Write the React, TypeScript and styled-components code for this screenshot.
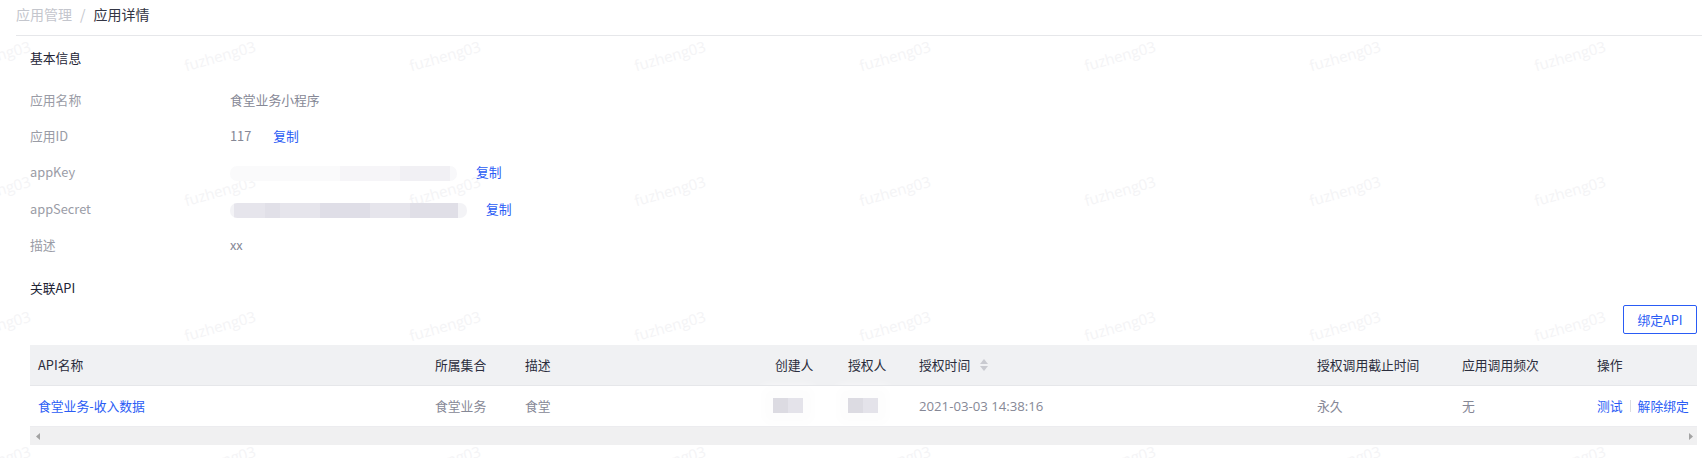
import styled, { createGlobalStyle } from "styled-components";

const GlobalStyle = createGlobalStyle`
  html, body {
    margin: 0;
    padding: 0;
    background: #fff;
    font-family: "Noto Sans CJK SC", "Liberation Sans", sans-serif;
    font-size: 12.8px;
    overflow: hidden;
  }
  * { box-sizing: border-box; }
`;

const Page = styled.div`
  position: relative;
  width: 1702px;
  height: 458px;
  overflow: hidden;
`;
const Watermarks = styled.div`
  position: absolute;
  top: 0;
  left: -32px;
  display: grid;
  grid-template-columns: repeat(9, 225px);
  grid-auto-rows: 135px;
  pointer-events: none;
`;
const Mark = styled.span`
  display: block;
  width: 75px;
  margin-top: 45px;
  font-family: "Open Sans", sans-serif;
  font-size: 15px;
  line-height: 18px;
  color: #f4f4f6;
  transform: rotate(-16deg);
`;
const Breadcrumb = styled.div`
  position: relative;
  z-index: 1;
  display: flex;
  align-items: center;
  gap: 8px;
  height: 36px;
  margin-left: 16px;
  padding-bottom: 8px;
  border-bottom: 1px solid #e6e7ea;
  font-size: 14px;
  line-height: 18px;
`;
const Crumb = styled.span<{ $current?: boolean }>`
  color: ${(p) => (p.$current ? "#333544" : "#c4c6cd")};
`;
const Content = styled.div`
  position: relative;
  z-index: 1;
  padding: 13px 5px 0 30px;
`;
const SectionTitle = styled.div`
  height: 18px;
  line-height: 18px;
  color: #232536;
`;
const InfoList = styled.div`
  margin: 24px 0 7px;
`;
const InfoRow = styled.div`
  display: flex;
  height: 36.2px;
  line-height: 18px;
`;
const Label = styled.div`
  width: 200px;
  color: #9a9ca6;
`;
const Value = styled.div`
  display: flex;
  color: #868896;
`;
const CopyLink = styled.a<{ $gap: number }>`
  margin-left: ${(p) => p.$gap}px;
  color: #2a5cf5;
`;
const Blur = styled.div<{ $width: number; $dark?: boolean }>`
  width: ${(p) => p.$width}px;
  height: 15px;
  margin-top: 3px;
  border-radius: 7px;
  background: ${(p) =>
    p.$dark
      ? "linear-gradient(90deg, #f3f3f6 0 4px, #e6e5ec 4px 35px, #e1e0e8 35px 50px, #e6e5ec 50px 90px, #dfdee7 90px 140px, #e6e5ec 140px 180px, #e0dfe7 180px 228px, #f3f3f6 228px)"
      : "linear-gradient(90deg, #fafafb 0 110px, #f6f5f8 110px 170px, #f1f0f4 170px 220px, #f8f8fa 220px)"};
  filter: blur(0.6px);
`;
const Toolbar = styled.div`
  display: flex;
  justify-content: flex-end;
  margin: 8px 0 11px;
`;
const BindButton = styled.button`
  width: 74px;
  height: 29px;
  padding: 0;
  border: 1px solid #2a5cf5;
  border-radius: 2px;
  background: #fff;
  color: #2a5cf5;
  font: inherit;
`;
const Table = styled.table`
  width: 100%;
  table-layout: fixed;
  border-collapse: collapse;
`;
const Th = styled.th`
  height: 41px;
  padding: 0 8px 2px;
  background: #f0f1f3;
  border-bottom: 1px solid #e6e7ea;
  color: #2b2d3c;
  font-weight: 400;
  text-align: left;
`;
const Td = styled.td`
  height: 41px;
  padding: 0 8px 2px;
  background: #fff;
  border-bottom: 1px solid #ececef;
  color: #868896;
  white-space: nowrap;
`;
const TimeText = styled.span`
  font-family: "Open Sans", sans-serif;
  font-size: 13.2px;
`;
const NameLink = styled.a`
  color: #2a5cf5;
`;
const SortIcon = styled.svg`
  margin-left: 10px;
  vertical-align: -1px;
`;
const Mosaic = styled.div<{ $shift?: number }>`
  display: flex;
  width: 30px;
  height: 15px;
  margin-left: ${(p) => p.$shift ?? 0}px;
  box-shadow: 0 0 10px 10px #fdfdfd;
`;
const Tile = styled.span<{ $dark?: boolean }>`
  flex: 1;
  background: ${(p) => (p.$dark ? "#dcdbe2" : "#e4e3ea")};
`;
const ActionSep = styled.span`
  display: inline-block;
  width: 1px;
  height: 12px;
  margin: 0 7px;
  background: #dcdde1;
  vertical-align: -1px;
`;
const Scrollbar = styled.div`
  display: flex;
  align-items: center;
  justify-content: space-between;
  height: 18px;
  padding: 0 4px 0 6px;
  background: #f0f0f1;
`;

const columns = [397, 90, 250, 73, 71, 398, 145, 135, 108];

const App = () => {
  return (
    <Page>
      <GlobalStyle />
      <Watermarks>
        {Array.from({ length: 36 }).map((_, i) => (
          <Mark key={i}>fuzheng03</Mark>
        ))}
      </Watermarks>
      <Breadcrumb>
        <Crumb>应用管理</Crumb>
        <Crumb>/</Crumb>
        <Crumb $current>应用详情</Crumb>
      </Breadcrumb>
      <Content>
        <SectionTitle>基本信息</SectionTitle>
        <InfoList>
          <InfoRow>
            <Label>应用名称</Label>
            <Value>食堂业务小程序</Value>
          </InfoRow>
          <InfoRow>
            <Label>应用ID</Label>
            <Value>
              117<CopyLink $gap={22}>复制</CopyLink>
            </Value>
          </InfoRow>
          <InfoRow>
            <Label>appKey</Label>
            <Value>
              <Blur $width={227} />
              <CopyLink $gap={19}>复制</CopyLink>
            </Value>
          </InfoRow>
          <InfoRow>
            <Label>appSecret</Label>
            <Value>
              <Blur $width={237} $dark />
              <CopyLink $gap={19}>复制</CopyLink>
            </Value>
          </InfoRow>
          <InfoRow>
            <Label>描述</Label>
            <Value>xx</Value>
          </InfoRow>
        </InfoList>
        <SectionTitle>关联API</SectionTitle>
        <Toolbar>
          <BindButton>绑定API</BindButton>
        </Toolbar>
        <Table>
          <colgroup>
            {columns.map((w, i) => (
              <col key={i} width={w} />
            ))}
          </colgroup>
          <thead>
            <tr>
              <Th>API名称</Th>
              <Th>所属集合</Th>
              <Th>描述</Th>
              <Th>创建人</Th>
              <Th>授权人</Th>
              <Th>
                授权时间
                <SortIcon width="8" height="12" viewBox="0 0 8 12">
                  <path d="M4 0 8 5H0z" fill="#c9cad0" />
                  <path d="M0 7h8l-4 5z" fill="#c9cad0" />
                </SortIcon>
              </Th>
              <Th>授权调用截止时间</Th>
              <Th>应用调用频次</Th>
              <Th>操作</Th>
            </tr>
          </thead>
          <tbody>
            <tr>
              <Td>
                <NameLink>食堂业务-收入数据</NameLink>
              </Td>
              <Td>食堂业务</Td>
              <Td>食堂</Td>
              <Td>
                <Mosaic $shift={-2}>
                  <Tile $dark />
                  <Tile />
                </Mosaic>
              </Td>
              <Td>
                <Mosaic>
                  <Tile $dark />
                  <Tile />
                </Mosaic>
              </Td>
              <Td>
                <TimeText>2021-03-03 14:38:16</TimeText>
              </Td>
              <Td>永久</Td>
              <Td>无</Td>
              <Td>
                <NameLink>测试</NameLink>
                <ActionSep />
                <NameLink>解除绑定</NameLink>
              </Td>
            </tr>
          </tbody>
        </Table>
        <Scrollbar>
          <svg width="4" height="7" viewBox="0 0 4 7">
            <path d="M4 0v7L0 3.5z" fill="#a3a3a3" />
          </svg>
          <svg width="4" height="7" viewBox="0 0 4 7">
            <path d="M0 0v7l4-3.5z" fill="#a3a3a3" />
          </svg>
        </Scrollbar>
      </Content>
    </Page>
  );
};

export default App;
